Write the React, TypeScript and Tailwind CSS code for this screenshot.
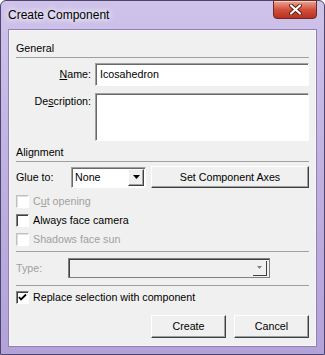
import React from 'react';

const sunken =
  'border border-t-[#a0a0a0] border-l-[#a0a0a0] border-b-white border-r-white shadow-[inset_1px_1px_0_#696969]';
const raised =
  'border border-t-white border-l-white border-b-[#404040] border-r-[#404040] shadow-[inset_-1px_-1px_0_#a0a0a0] bg-[#f0f0f0]';

const SectionHeader: React.FC<{ title: string; className?: string }> = ({ title, className }) => (
  <div className={className}>
    <div className="h-[14px] leading-[14px]">{title}</div>
    <div className="mt-[2px] h-px bg-[#a0a0a0]" />
  </div>
);

const Checkbox: React.FC<{ label: React.ReactNode; checked?: boolean; disabled?: boolean; className?: string }> = ({
  label,
  checked,
  disabled,
  className,
}) => (
  <div className={`flex h-[14px] items-center gap-[4px] ${className ?? ''}`}>
    <div
      className={`flex h-[13px] w-[13px] items-center justify-center bg-white border ${
        disabled
          ? 'border-t-[#c0c0c0] border-l-[#c0c0c0] border-b-white border-r-white shadow-[inset_1px_1px_0_#e0e0e0] bg-[#f0f0f0]'
          : 'border-t-[#808080] border-l-[#808080] border-b-white border-r-white shadow-[inset_1px_1px_0_#404040]'
      }`}
    >
      {checked && (
        <svg width="9" height="9" viewBox="0 0 9 9">
          <path d="M1 4 L3 6.5 L8 1.5" stroke="#000" strokeWidth="1.8" fill="none" />
        </svg>
      )}
    </div>
    <span className={`leading-[14px] ${disabled ? 'text-[#a0a0a0]' : ''}`}>{label}</span>
  </div>
);

const App: React.FC = () => {
  return (
    <div
      className="flex h-[355px] w-[325px] flex-col rounded-t-[6px] border border-[#4e4470] bg-gradient-to-b from-[#cfc3ea] via-[#bfb0e0] to-[#b3a2d8] text-[10.7px] text-black"
      style={{ fontFamily: '"Liberation Sans", Arial, sans-serif' }}
    >
      {/* title bar */}
      <div className="relative flex h-[28px] items-center pl-[7px]">
        <span className="text-[12px] text-black [text-shadow:0_0_6px_#fff,0_0_6px_#fff]">Create Component</span>
        <div className="absolute right-[7px] top-[-1px] flex h-[19px] w-[44px] items-center justify-center rounded-b-[4px] border border-[#6a2a2a] bg-gradient-to-b from-[#e9a596] via-[#d2503c] to-[#b8301e] shadow-[inset_0_1px_0_#f6cfc6]">
          <svg width="13" height="11" viewBox="0 0 13 11">
            <path d="M2 1.5 L11 9.5 M11 1.5 L2 9.5" stroke="#5a1a10" strokeWidth="4" strokeLinecap="round" />
            <path d="M2 1.5 L11 9.5 M11 1.5 L2 9.5" stroke="#fff" strokeWidth="2.2" strokeLinecap="round" />
          </svg>
        </div>
      </div>

      {/* client area */}
      <div className="mx-[7px] flex h-[318px] flex-col border border-[#8f80b6] bg-[#f0f0f0] px-[7px] shadow-[inset_0_0_0_1px_#f8f6fc]">
        <SectionHeader title="General" className="mt-[11px]" />

        <div className="mt-[5px] flex items-center gap-[4px]">
          <div className="w-[75px] text-right">
            <span className="underline">N</span>ame:
          </div>
          <div className={`flex h-[23px] flex-1 items-center bg-white pl-[4px] ${sunken}`}>Icosahedron</div>
        </div>

        <div className="mt-[7px] flex gap-[4px]">
          <div className="w-[75px] pt-[1px] text-right leading-[14px]">
            De<span className="underline">s</span>cription:
          </div>
          <div className={`h-[48px] flex-1 bg-white ${sunken}`} />
        </div>

        <SectionHeader title="Alignment" className="mt-[4px]" />

        <div className="mt-[4px] flex h-[22px] items-center">
          <div className="w-[55px]">Glue to:</div>
          <div className={`flex h-[21px] w-[75px] items-center bg-white ${sunken}`}>
            <span className="flex-1 pl-[3px]">None</span>
            <div className={`mr-[1px] flex h-[17px] w-[16px] items-center justify-center ${raised}`}>
              <svg width="7" height="4" viewBox="0 0 7 4">
                <path d="M0 0 H7 L3.5 4 Z" fill="#000" />
              </svg>
            </div>
          </div>
          <div className={`ml-[5px] flex h-[22px] flex-1 items-center justify-center ${raised}`}>Set Component Axes</div>
        </div>

        <Checkbox
          className="mt-[6px]"
          disabled
          label={
            <>
              C<span className="underline">u</span>t opening
            </>
          }
        />
        <Checkbox className="mt-[5px]" label="Always face camera" />
        <Checkbox className="mt-[5px]" disabled label="Shadows face sun" />

        <div className="mt-[5px] h-px bg-[#a0a0a0]" />

        <div className="mt-[6px] flex h-[20px] items-center">
          <div className="w-[52px] text-[#a0a0a0]">Type:</div>
          <div className="flex h-[20px] w-[202px] items-center justify-end border border-[#808080] bg-[#f0f0f0] pr-[2px] shadow-[inset_1px_1px_0_#404040]">
            <div className="flex h-[15px] w-[14px] items-center justify-center border-b border-r border-[#404040]">
              <svg width="5" height="3" viewBox="0 0 5 3">
                <path d="M0 0 H5 L2.5 3 Z" fill="#808080" />
              </svg>
            </div>
          </div>
        </div>

        <div className="mt-[7px] h-px bg-[#a0a0a0]" />

        <Checkbox className="mt-[4px]" checked label="Replace selection with component" />

        <div className="mt-[11px] flex justify-end gap-[8px]">
          <div className={`flex h-[23px] w-[75px] items-center justify-center ${raised}`}>Create</div>
          <div className={`flex h-[23px] w-[75px] items-center justify-center ${raised}`}>Cancel</div>
        </div>
      </div>
    </div>
  );
};

export default App;
